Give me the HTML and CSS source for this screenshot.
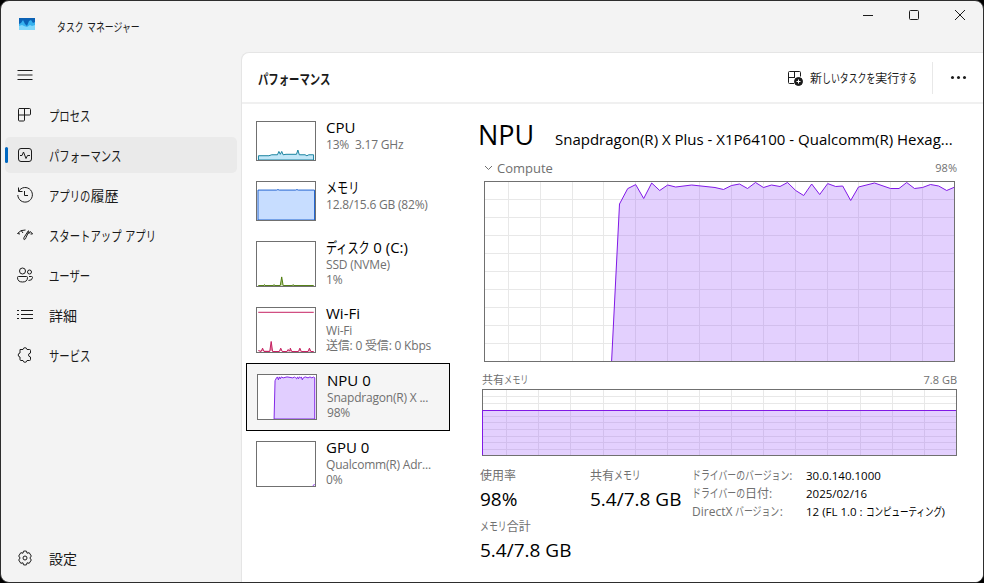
FILE: index.html
```
<!DOCTYPE html>
<html lang="ja">
<head>
  <meta charset="UTF-8">
  <title>タスク マネージャー</title>
  <link rel="stylesheet" href="styles.css">
</head>
<body>

<div class="window">
  <header class="titlebar">
    <svg class="app-icon" width="16" height="12" viewBox="0 0 16 12">
      <rect width="16" height="12" fill="#0b62b5"/>
      <path d="M0 6L2 5L4 2L6 6L8 8L10 3L12 2L14 5L16 4V12H0Z" fill="#36b1ee"/>
      <path d="M0 8L3 7L5 8L8 9L11 7L13 8L16 7V12H0Z" fill="#7fd7fb"/>
    </svg>
    <div class="title"><span class="kana n3">タスク</span> <span class="kana n6">マネージャー</span></div>
    <div class="window-buttons">
      <svg width="12" height="12" viewBox="0 0 12 12"><path d="M1 6.5H11"/></svg>
      <svg width="12" height="12" viewBox="0 0 12 12"><rect x="1.5" y="1.5" width="9" height="9" rx="1"/></svg>
      <svg width="12" height="12" viewBox="0 0 12 12"><path d="M1 1L11 11M11 1L1 11"/></svg>
    </div>
  </header>

  <div class="body">
    <nav class="sidebar">
      <div class="nav-item menu">
        <svg width="16" height="16" viewBox="0 0 16 16"><path d="M0.500 3.500H15.500M0.500 8H15.500M0.500 12.500H15.500"/></svg>
      </div>
      <div class="nav-item">
        <svg width="16" height="16" viewBox="0 0 16 16"><path d="M2 1.500H12.500Q13.500 1.500 13.500 2.500V7Q13.500 8 12.500 8H7.500V13Q7.500 14 6.500 14H2.500Q1.500 14 1.500 13V2.500Q1.500 1.500 2.500 1.500M7.500 1.500V8M1.500 8H7.500"/></svg>
        <span><span class="kana n4">プロセス</span></span>
      </div>
      <div class="nav-item active">
        <svg width="16" height="16" viewBox="0 0 16 16"><rect x="1.500" y="1.500" width="13" height="13" rx="2.500"/><path d="M3 8.500H5L6.500 5L9 11.500L10.500 8.500H13"/></svg>
        <span><span class="kana n7">パフォーマンス</span></span>
      </div>
      <div class="nav-item">
        <svg width="16" height="16" viewBox="0 0 16 16"><path d="M1.500 0.500V4.500H5.500M1.700 4.300A7.300 7.300 0 1 1 0.800 8M7.500 4V8.500H11"/></svg>
        <span><span class="kana n4">アプリの</span>履歴</span>
      </div>
      <div class="nav-item">
        <svg width="16" height="16" viewBox="0 0 16 16"><path d="M0.500 6.500Q3.500 2.500 8.500 3M0.500 6.500L3 7M4.500 4L6 6M11.500 3.500L7 10.500Q6.300 13 7.700 12.500Q8.700 12 9 10.500L12 4M13 5L11.500 7M13 4.500Q15 5.500 15.500 7H13.500"/></svg>
        <span><span class="kana n7">スタートアップ</span> <span class="kana n3">アプリ</span></span>
      </div>
      <div class="nav-item">
        <svg width="16" height="16" viewBox="0 0 16 16"><circle cx="5.500" cy="4" r="3"/><circle cx="12.500" cy="5" r="2"/><path d="M1.500 9.500H9.500Q10.500 9.500 10.500 10.500Q10.500 15 5.500 15Q0.500 15 0.500 10.500Q0.500 9.500 1.500 9.500ZM12 9.500H14.500Q15.500 9.500 15.500 10.500Q15.500 13.500 11.500 13.500"/></svg>
        <span><span class="kana n4">ユーザー</span></span>
      </div>
      <div class="nav-item">
        <svg width="16" height="16" viewBox="0 0 16 16"><path d="M0 3.500H2M4 3.500H16M0 7.500H2M4 7.500H16M0 11.500H2M4 11.500H16"/></svg>
        <span>詳細</span>
      </div>
      <div class="nav-item">
        <svg width="16" height="16" viewBox="0 0 16 16"><path d="M3 2.500H6Q6.300 0.700 8 0.700T10 2.500H12.500Q13.500 2.500 13.500 3.500V6Q11.500 6.300 11.500 8T13.500 10V12.500Q13.500 13.500 12.500 13.500H10Q9.700 15.300 8 15.300T6 13.500H4Q3 13.500 3 12.500V10Q1.200 9.700 1.200 8T3 6Z"/></svg>
        <span><span class="kana n4">サービス</span></span>
      </div>
      <div class="nav-item settings">
        <svg width="16" height="16" viewBox="0 0 16 16"><circle cx="8" cy="8" r="2"/><path d="M6.500 1.200Q8 0.800 9.500 1.200L10 3.200L12.200 2.700L14.300 6L12.900 8L14.300 10L12.200 13.300L10 12.800L9.500 14.800Q8 15.200 6.500 14.800L6 12.800L3.800 13.300L1.700 10L3.100 8L1.700 6L3.800 2.700L6 3.200Z"/></svg>
        <span>設定</span>
      </div>
    </nav>

    <main class="panel">
      <div class="toolbar">
        <h1><span class="kana n7">パフォーマンス</span></h1>
        <div class="run-task">
          <svg width="16" height="16" viewBox="0 0 16 16"><path d="M7 13.500H2.500Q1.500 13.500 1.500 12.500V2.500Q1.500 1.500 2.500 1.500H12.500Q13.500 1.500 13.500 2.500V6.500M7.500 1.500V7M1.500 7.500H8"/><circle class="solid" cx="11.500" cy="11.500" r="4"/><path class="plus" d="M11.500 9.500V13.500M9.500 11.500H13.500"/></svg>
          <span>新<span class="kana n6">しいタスクを</span>実行<span class="kana n2">する</span></span>
        </div>
        <div class="more"><i></i><i></i><i></i></div>
      </div>

      <div class="content">
        <div class="devices">
          <div class="device">
            <svg class="thumb cpu" width="60" height="40" viewBox="0 0 60 40">
              <path d="M1 35.500H12L15 34.500H21L22.500 31L24 34L25.500 31L27 34.500L30 34H41L42.500 29.500L44 34.500H50L52 35.500L54 34.500H59V40H1Z"/>
            </svg>
            <div class="info">
              <h2>CPU</h2>
              <p>13%&nbsp; 3.17 GHz</p>
            </div>
          </div>
          <div class="device">
            <svg class="thumb memory" width="60" height="40" viewBox="0 0 60 40">
              <path d="M0.500 8.500H20L21.500 8L23 8.500H40L41.500 8L43 8.500H60V40H0.500Z"/>
            </svg>
            <div class="info">
              <h2><span class="kana n3">メモリ</span></h2>
              <p>12.8/15.6 GB (82%)</p>
            </div>
          </div>
          <div class="device">
            <svg class="thumb disk" width="60" height="46" viewBox="0 0 60 46">
              <path d="M1 45.500H7L7.500 44.500L8 45.500H17L17.500 44.500L18 45.500H24L25.500 36.500L27 45.500H37L37.500 44.500L38 45.500H59"/>
            </svg>
            <div class="info">
              <h2><span class="kana n4">ディスク</span> 0 (C:)</h2>
              <p>SSD (NVMe)</p>
              <p>1%</p>
            </div>
          </div>
          <div class="device">
            <svg class="thumb wifi" width="60" height="46" viewBox="0 0 60 46">
              <path d="M1 4.500H59"/>
              <path d="M1 44.500L4 45.500L5.500 42L7 45.500H13L14.500 35L16 45.500H23L24.500 42L26 45.500H31L32 43.500L34 45L34.500 42L36 45.500H43L44.500 42L46 45.500H53L54.500 42L56 45.500H59"/>
            </svg>
            <div class="info">
              <h2>Wi-Fi</h2>
              <p>Wi-Fi</p>
              <p>送信: 0 受信: 0 Kbps</p>
            </div>
          </div>
          <div class="device selected">
            <svg class="thumb npu" width="60" height="46" viewBox="0 0 60 46">
              <path d="M16.500 46L17.500 6L19 3L20 2L21 5L22 2L23 4L24 2L26 3L30 2L36 3L38 2L39 3L40 4L41 2L42 4L43 2L44 3L45 2L46 5L47 3L49 2L52 3L54 2L56 3L58 2L59 3V46Z"/>
            </svg>
            <div class="info">
              <h2>NPU 0</h2>
              <p>Snapdragon(R) X ...</p>
              <p>98%</p>
            </div>
          </div>
          <div class="device">
            <svg class="thumb npu" width="60" height="46" viewBox="0 0 60 46">
              <path d="M58 45.500L60 44.500"/>
            </svg>
            <div class="info">
              <h2>GPU 0</h2>
              <p>Qualcomm(R) Adr...</p>
              <p>0%</p>
            </div>
          </div>
        </div>

        <section class="detail">
          <div class="heading">
            <h2>NPU</h2>
            <span class="model">Snapdragon(R) X Plus - X1P64100 - Qualcomm(R) Hexag...</span>
          </div>

          <div class="graph-label compute">
            <svg width="9" height="6" viewBox="0 0 9 6"><path d="M1 1L4.500 4.500L8 1"/></svg>
            <span class="engine">Compute</span>
            <span class="max">98%</span>
          </div>
          <svg class="graph main-graph" width="471" height="181" viewBox="0 0 471 181">
            <path class="grid" d="M24.500 0V181M56.500 0V181M88.500 0V181M119.500 0V181M151.500 0V181M183.500 0V181M215.500 0V181M247.500 0V181M279.500 0V181M311.500 0V181M343.500 0V181M374.500 0V181M406.500 0V181M438.500 0V181M0 18.500H471M0 36.500H471M0 54.500H471M0 72.500H471M0 90.500H471M0 108.500H471M0 126.500H471M0 144.500H471M0 162.500H471"/>
            <path class="usage" d="M127.500 182L135.500 23L143.700 7.600L151.700 3.600L159.700 17.500L167.700 2L175.700 9.500L183.700 4L191.700 6L207.700 4L231 6.500L239.500 8.500L247.500 4.500L255.500 3L263.500 7.500L271.500 1.500L279.500 6.500L287.500 4L296 5.500L303.500 1.500L311.700 9.500L319.700 14.500L327.700 3L335.700 13.500L343.700 2.600L351.700 5.500L358.700 5L366.700 19.500L374.500 6L390.500 2L406.500 7.500H415L422.700 1.500L430.500 7.500L438.500 6.500L446.500 3.500L454.700 5L462.700 9.500L472 5.500V182Z"/>
            <rect class="frame" x="0.500" y="0.500" width="470" height="180"/>
          </svg>

          <div class="graph-label shared">
            <span>共有<span class="kana n3">メモリ</span></span>
            <span class="max">7.8 GB</span>
          </div>
          <svg class="graph memory-graph" width="475" height="67" viewBox="0 0 475 67">
            <path class="grid" d="M24.500 0V67M56.500 0V67M88.500 0V67M121.500 0V67M153.500 0V67M185.500 0V67M217.500 0V67M249.500 0V67M281.500 0V67M313.500 0V67M345.500 0V67M378.500 0V67M410.500 0V67M442.500 0V67M0 7.500H475M0 14.500H475M0 27.500H475M0 33.500H475M0 40.500H475M0 47.500H475M0 53.500H475M0 60.500H475"/>
            <rect class="frame" x="0.500" y="0.500" width="474" height="66"/>
            <path class="usage" d="M0.500 68V21.500H476V68Z"/>
            <path class="frame" d="M0 66.500H474.500V0"/>
          </svg>

          <div class="stats">
            <div class="stat">
              <p>使用率</p>
              <strong>98%</strong>
              <p><span class="kana n3">メモリ</span>合計</p>
              <strong>5.4/7.8 GB</strong>
            </div>
            <div class="stat">
              <p>共有<span class="kana n3">メモリ</span></p>
              <strong>5.4/7.8 GB</strong>
            </div>
            <dl class="driver">
              <dt><span class="kana n11">ドライバーのバージョン</span>:</dt>
              <dd>30.0.140.1000</dd>
              <dt><span class="kana n6">ドライバーの</span>日付:</dt>
              <dd>2025/02/16</dd>
              <dt>DirectX <span class="kana n5">バージョン</span>:</dt>
              <dd>12 (FL 1.0 : <span class="kana n9">コンピューティング</span>)</dd>
            </dl>
          </div>
        </section>
      </div>
    </main>
  </div>
</div>

</body>
</html>
```
FILE: styles.css
```
* {
  box-sizing: border-box;
}

body {
  margin: 0;
  background-color: #000;
  font-family: "Open Sans", "Noto Sans CJK JP", sans-serif;
  font-size: 12px;
  color: #1a1a1a;
}

h1, h2, p, dl, dd {
  margin: 0;
  font-weight: normal;
}

svg {
  display: block;
  flex: none;
  fill: none;
  stroke: #1b1b1b;
}

.window {
  width: 984px;
  height: 583px;
  border: 1px solid #2d2d2d;
  border-radius: 9px;
  background-color: #f3f3f3;
  overflow: hidden;
  display: flex;
  flex-direction: column;
}

/* condensed kana: --n is the number of characters */
.kana {
  display: inline-block;
  white-space: nowrap;
  transform: scaleX(0.74);
  transform-origin: left;
  margin-right: calc(var(--n) * -0.26em);
}

.n2 { --n: 2; }
.n3 { --n: 3; }
.n4 { --n: 4; }
.n5 { --n: 5; }
.n6 { --n: 6; }
.n7 { --n: 7; }
.n9 { --n: 9; }
.n11 { --n: 11; }

/* title bar */
.titlebar {
  height: 51px;
  flex: none;
  display: flex;
  align-items: center;
  padding-left: 18px;
}

.app-icon {
  stroke: none;
  margin-bottom: 5px;
}

.title {
  margin-left: 22px;
}

.window-buttons {
  display: flex;
  gap: 34px;
  margin-left: auto;
  padding: 0 17px 23px 0;
}

/* sidebar */
.body {
  flex: 1;
  display: flex;
  min-height: 0;
}

.sidebar {
  width: 240px;
  padding: 5px 4px 6px;
  display: flex;
  flex-direction: column;
  gap: 4px;
}

.nav-item {
  height: 36px;
  display: flex;
  align-items: center;
  gap: 16px;
  padding-left: 12px;
  border-radius: 5px;
  font-size: 14px;
  white-space: nowrap;
}

.nav-item.active {
  background-color: #eaeaea;
  padding-left: 0;
  gap: 0;
}

.nav-item.active svg {
  margin: 0 16px 0 9px;
}

.nav-item.active::before {
  content: "";
  width: 3px;
  height: 16px;
  border-radius: 2px;
  background-color: #0067c0;
}

.settings {
  margin-top: auto;
}

/* main panel */
.panel {
  flex: 1;
  border: 1px solid #e5e5e5;
  border-width: 1px 0 0 1px;
  border-top-left-radius: 8px;
  background-color: #fff;
}

.toolbar {
  height: 51px;
  display: flex;
  align-items: center;
  padding-left: 16px;
  border-bottom: 2px solid #f0f0f0;
}

.toolbar h1 {
  font-size: 14px;
  font-weight: 600;
}

.run-task {
  display: flex;
  align-items: center;
  gap: 7px;
  margin-left: auto;
}

.run-task .solid {
  fill: #1b1b1b;
}

.run-task .plus {
  stroke: #fff;
}

.more {
  display: flex;
  align-items: center;
  justify-content: center;
  gap: 3px;
  width: 51px;
  height: 32px;
  margin-left: 15px;
  border-left: 1px solid #e8e8e8;
}

.more i {
  width: 3px;
  height: 3px;
  border-radius: 50%;
  background-color: #1b1b1b;
}

.content {
  display: flex;
}

/* device list */
.devices {
  width: 204px;
  margin: 7px 0 0 4px;
  flex: none;
}

.device {
  display: flex;
  gap: 10px;
  padding: 10px;
}

.device.selected {
  border: 1px solid #000;
  background-color: #f5f5f5;
}

.thumb {
  border: 1px solid #707070;
  background-color: #fff;
}

.thumb.cpu {
  stroke: #117d9b;
  fill: #c2e7f8;
}

.thumb.memory {
  stroke: #1a5fce;
  fill: #c7ddff;
}

.thumb.disk {
  stroke: #4c7a0a;
  fill: #b5cf8d;
}

.thumb.wifi {
  stroke: #c2185b;
  fill: #e58aa8;
}

.thumb.npu {
  stroke: #7d1fe6;
  fill: #e1ceff;
}

.info {
  white-space: nowrap;
  margin-top: -5px;
}

.info h2 {
  height: 21px;
  line-height: 23px;
  font-size: 15px;
  color: #000;
}

.info p {
  height: 15px;
  line-height: 15px;
  font-size: 12px;
  color: #707070;
  letter-spacing: -0.2px;
}

/* detail view */
.detail {
  margin-left: 28px;
  flex: 1;
  color: #707070;
}

.heading {
  height: 55px;
  display: flex;
  align-items: baseline;
  padding-top: 12px;
  color: #000;
  white-space: nowrap;
}

.heading h2 {
  width: 77px;
  font-size: 27px;
  line-height: 38px;
}

.model {
  font-size: 15px;
}

.graph-label {
  display: flex;
  align-items: center;
  height: 18px;
  line-height: 18px;
  width: 479px;
}

.compute {
  padding-left: 6px;
  margin-bottom: 4px;
}

.compute svg {
  stroke: #707070;
}

.engine {
  font-size: 13px;
  margin-left: 4px;
}

.max {
  margin-left: auto;
  font-size: 11px;
}

.main-graph {
  margin-left: 6px;
}

.memory-graph {
  margin-left: 4px;
}

.shared {
  padding-left: 4px;
  margin-top: 9px;
  font-size: 11px;
}

.grid {
  stroke: #e8e8e8;
}

.usage {
  stroke: #8019e6;
  fill: rgba(150, 80, 250, 0.27);
}

.frame {
  stroke: #707070;
}

.stats {
  display: flex;
  margin: 10px 0 0 2px;
  white-space: nowrap;
}

.stat {
  width: 110px;
}

.stat p {
  height: 20px;
  line-height: 20px;
}

.stat strong {
  display: block;
  height: 31px;
  line-height: 27px;
  font-size: 19px;
  font-weight: normal;
  color: #000;
}

.driver {
  display: grid;
  grid-template-columns: 114px auto;
  grid-auto-rows: 18px;
  align-content: start;
  line-height: 18px;
  margin-left: -8px;
  padding-top: 1px;
}

.driver dd {
  color: #000;
  font-size: 11.5px;
}
```
